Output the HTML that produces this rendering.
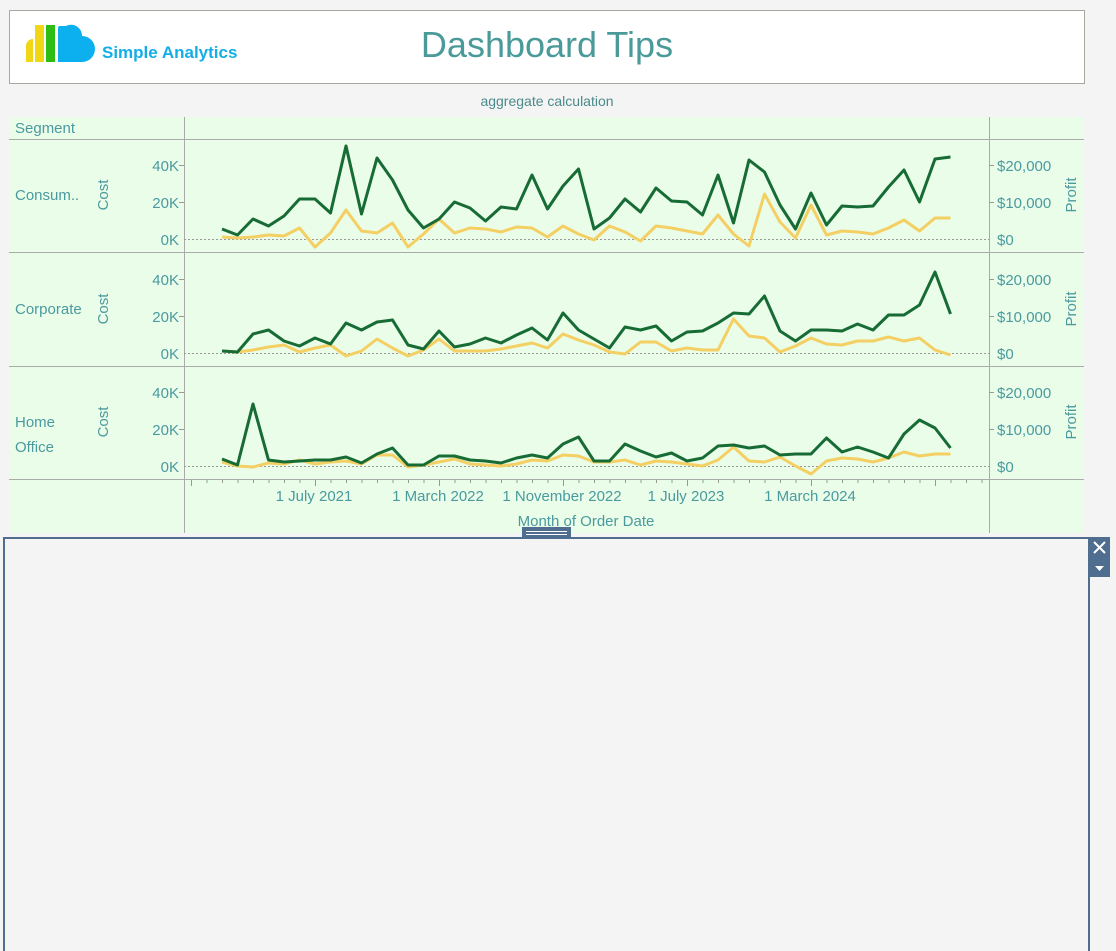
<!DOCTYPE html>
<html><head><meta charset="utf-8"><style>
body{margin:0;width:1116px;height:951px;background:#f4f4f4;overflow:hidden;font-family:"Liberation Sans",sans-serif;position:relative}
.hdr{position:absolute;left:9px;top:10px;width:1074px;height:72px;background:#fff;border:1px solid #a8a8a0}
</style></head><body>
<div class="hdr"></div>
<svg width="1116" height="951" style="position:absolute;left:0;top:0" font-family="Liberation Sans, sans-serif">
<!-- logo -->
<path d="M26 62 V46 a7 7 0 0 1 7-7 V62Z" fill="#f0d614"/>
<rect x="35" y="25" width="9" height="37" fill="#f0d614"/>
<rect x="46" y="25" width="9" height="37" fill="#2ebd14"/>
<path d="M58 62 V28 a2 2 0 0 1 2-2 h6 a11 11 0 0 1 16 10 a13 13 0 0 1 0 26 Z" fill="#0cb0ee"/>
<text x="102" y="58" font-size="17" font-weight="bold" fill="#14aee6">Simple Analytics</text>
<text x="547" y="57" font-size="36" fill="#4a9a9a" text-anchor="middle">Dashboard Tips</text>
<text x="547" y="106" font-size="14" fill="#4a8a8a" text-anchor="middle">aggregate calculation</text>
<rect x="9" y="117" width="1075" height="416" fill="#eafde8"/>
<g stroke="#aaa" stroke-width="1">
<line x1="9" y1="139.5" x2="1084" y2="139.5"/><line x1="9" y1="252.5" x2="1084" y2="252.5"/><line x1="9" y1="366.5" x2="1084" y2="366.5"/><line x1="9" y1="479.5" x2="1084" y2="479.5"/>
<line x1="184.5" y1="117" x2="184.5" y2="533"/><line x1="989.5" y1="117" x2="989.5" y2="533"/>
</g>
<g stroke="#999" stroke-dasharray="2 2"><line x1="184" y1="239.5" x2="989" y2="239.5"/><line x1="184" y1="353.5" x2="989" y2="353.5"/><line x1="184" y1="466.5" x2="989" y2="466.5"/></g>
<g fill="#4a9aa0" font-size="15">
<text x="15" y="133">Segment</text>
<text x="15" y="200">Consum..</text>
<text x="15" y="314">Corporate</text>
<text x="15" y="427">Home</text><text x="15" y="452">Office</text>
<text transform="translate(108,195) rotate(-90)" text-anchor="middle">Cost</text>
<text transform="translate(108,309) rotate(-90)" text-anchor="middle">Cost</text>
<text transform="translate(108,422) rotate(-90)" text-anchor="middle">Cost</text>
<text transform="translate(1076,195) rotate(-90)" text-anchor="middle">Profit</text>
<text transform="translate(1076,309) rotate(-90)" text-anchor="middle">Profit</text>
<text transform="translate(1076,422) rotate(-90)" text-anchor="middle">Profit</text>
<g text-anchor="end">
<text x="179" y="171">40K</text><text x="179" y="208">20K</text><text x="179" y="245">0K</text>
<text x="179" y="285">40K</text><text x="179" y="322">20K</text><text x="179" y="359">0K</text>
<text x="179" y="398">40K</text><text x="179" y="435">20K</text><text x="179" y="472">0K</text>
</g>
<text x="997" y="171">$20,000</text><text x="997" y="208">$10,000</text><text x="997" y="245">$0</text>
<text x="997" y="285">$20,000</text><text x="997" y="322">$10,000</text><text x="997" y="359">$0</text>
<text x="997" y="398">$20,000</text><text x="997" y="435">$10,000</text><text x="997" y="472">$0</text>
<g text-anchor="middle"><text x="314" y="501">1 July 2021</text><text x="438" y="501">1 March 2022</text><text x="562" y="501">1 November 2022</text><text x="686" y="501">1 July 2023</text><text x="810" y="501">1 March 2024</text>
<text x="586" y="526">Month of Order Date</text></g>
</g>
<g stroke="#999"><line x1="179" y1="165.5" x2="184" y2="165.5"/><line x1="179" y1="202.5" x2="184" y2="202.5"/><line x1="179" y1="279.5" x2="184" y2="279.5"/><line x1="179" y1="316.5" x2="184" y2="316.5"/><line x1="179" y1="392.5" x2="184" y2="392.5"/><line x1="179" y1="429.5" x2="184" y2="429.5"/>
<line x1="989" y1="165.5" x2="994" y2="165.5"/><line x1="989" y1="202.5" x2="994" y2="202.5"/><line x1="989" y1="279.5" x2="994" y2="279.5"/><line x1="989" y1="316.5" x2="994" y2="316.5"/><line x1="989" y1="392.5" x2="994" y2="392.5"/><line x1="989" y1="429.5" x2="994" y2="429.5"/></g>
<g id="ticks" stroke="#999"></g>
<g id="lines" fill="none" stroke-width="3" stroke-linejoin="round"></g>
<rect x="4" y="538" width="1085" height="420" fill="#f4f4f4" stroke="#4f6d8f" stroke-width="2"/>
<rect x="522" y="527" width="49" height="11" fill="#4f6d8f"/>
<line x1="526" y1="531.5" x2="567" y2="531.5" stroke="#fff"/><line x1="526" y1="534.5" x2="567" y2="534.5" stroke="#fff"/>
<rect x="1090" y="537" width="20" height="40" fill="#4f6d8f"/>
<path d="M1094 542 L1105 553 M1105 542 L1094 553" stroke="#fff" stroke-width="2"/>
<path d="M1095 566 h9 l-4.5 5z" fill="#fff"/>
</svg>
<script>
var d={
cg:[229,235,219,226,216,199,199,213,146,214,158,180,210,228,219,202,208,221,207,209,175,209,186,169,229,218,199,212,188,201,202,215,175,223,160,172,205,229,193,225,206,207,206,187,170,202,159,157],
cy:[237,238,237,235,236,228,247,233,210,231,233,223,247,234,219,233,228,229,232,227,228,237,226,234,240,226,232,241,226,228,231,234,215,234,246,194,222,238,205,235,231,232,234,228,220,231,218,218],
pg:[351,352,334,330,341,346,338,344,323,330,322,320,345,349,331,347,344,338,343,335,328,340,313,330,339,348,327,330,326,341,332,331,323,313,314,296,331,341,330,330,331,324,330,315,315,305,272,314],
py:[351,352,350,347,345,352,348,345,356,351,339,348,356,350,339,351,351,351,349,346,343,348,334,340,345,352,354,342,342,351,348,350,350,319,336,338,352,346,338,344,345,341,341,337,341,338,350,355],
hg:[459,465,404,460,462,461,460,460,457,463,454,448,465,465,456,456,460,461,463,458,455,458,444,437,461,461,444,451,457,453,461,458,446,445,448,446,455,454,454,438,452,447,452,458,434,420,428,448],
hy:[462,466,467,463,464,460,464,462,461,464,455,455,467,465,462,459,464,465,466,464,460,461,455,456,462,462,460,465,461,462,464,466,460,447,461,462,457,466,474,461,458,459,462,458,452,456,454,454]};
var g=document.getElementById('lines'),s='';
['cy','cg','py','pg','hy','hg'].forEach(function(k){var p=d[k].map(function(v,i){return (222+i*15.5).toFixed(1)+','+v}).join(' ');
s+='<polyline points="'+p+'" stroke="'+(k[1]=='g'?'#176b35':'#f4cf63')+'"/>';});
g.innerHTML=s;
var t='';for(var i=-2;i<50;i++){var x=222+i*15.5;if(x<186||x>988)continue;var L=((i-6)%8==0)?6:3;t+='<line x1="'+(x+.5)+'" y1="480" x2="'+(x+.5)+'" y2="'+(480+L)+'"/>';}
document.getElementById('ticks').innerHTML=t;
</script>
</body></html>
